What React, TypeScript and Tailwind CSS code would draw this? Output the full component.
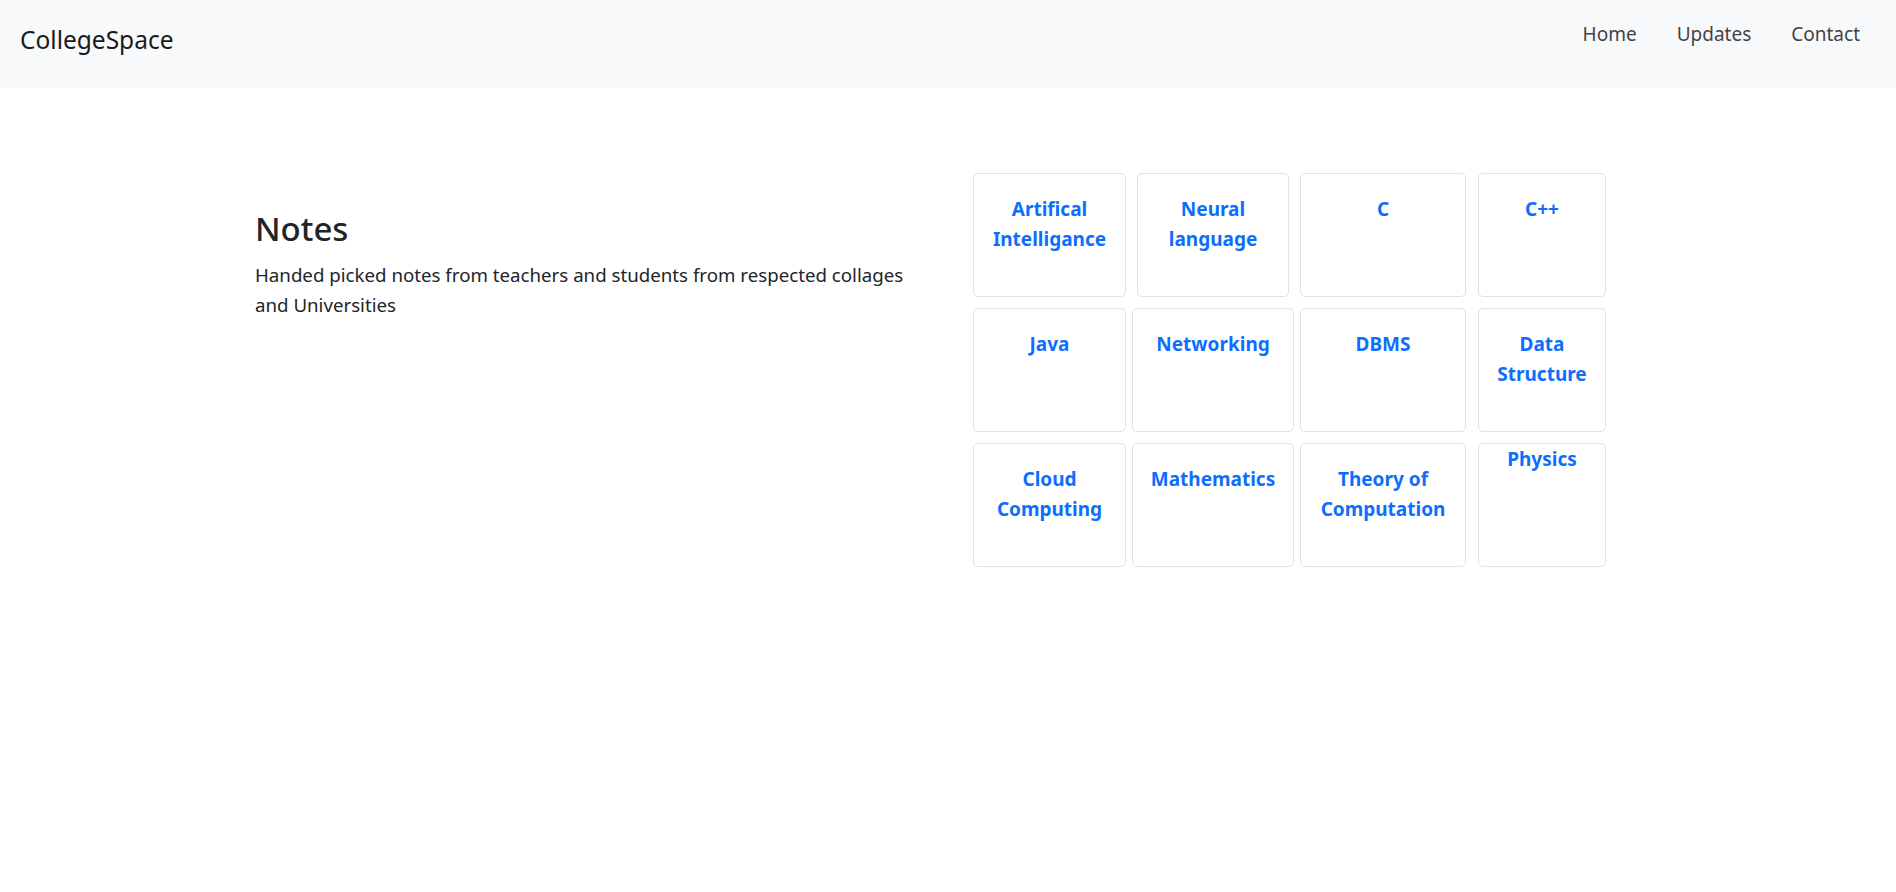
import React from 'react';

const font = { fontFamily: '"Noto Sans", "Open Sans", Arial, sans-serif' };

type Subject = { label: string; w: string; ml: string; top?: boolean };

const rows: Subject[][] = [
  [
    { label: 'Artifical Intelligance', w: 'w-[153px]', ml: 'ml-0' },
    { label: 'Neural language', w: 'w-[152px]', ml: 'ml-[11px]' },
    { label: 'C', w: 'w-[166px]', ml: 'ml-[11px]' },
    { label: 'C++', w: 'w-[128px]', ml: 'ml-[12px]' },
  ],
  [
    { label: 'Java', w: 'w-[153px]', ml: 'ml-0' },
    { label: 'Networking', w: 'w-[162px]', ml: 'ml-[6px]' },
    { label: 'DBMS', w: 'w-[166px]', ml: 'ml-[6px]' },
    { label: 'Data Structure', w: 'w-[128px]', ml: 'ml-[12px]' },
  ],
  [
    { label: 'Cloud Computing', w: 'w-[153px]', ml: 'ml-0' },
    { label: 'Mathematics', w: 'w-[162px]', ml: 'ml-[6px]' },
    { label: 'Theory of Computation', w: 'w-[166px]', ml: 'ml-[6px]' },
    { label: 'Physics', w: 'w-[128px]', ml: 'ml-[12px]', top: true },
  ],
];

function SubjectCard({ label, w, ml, top }: Subject) {
  return (
    <a
      href="#"
      className={`${w} ${ml} h-[124px] shrink-0 rounded-[5px] border border-[#dee2e6] bg-white px-[12px] text-center text-[19px] font-bold leading-[30px] text-[#0d6efd] ${top ? 'pt-0' : 'pt-[20px]'}`}
    >
      {label}
    </a>
  );
}

export default function App() {
  return (
    <div className="min-h-screen bg-white text-[#212529]" style={font}>
      <nav className="flex h-[88px] items-start justify-between bg-[#f8f9fa] pl-[20px]">
        <span className="mt-[22px] text-[24.5px] leading-[36px] text-[#1a1b1c]">CollegeSpace</span>
        <ul className="mt-[20px] flex gap-[40px] pr-[36px] text-[19px] leading-[28px] text-[#434445]">
          <li><a href="#">Home</a></li>
          <li><a href="#">Updates</a></li>
          <li><a href="#">Contact</a></li>
        </ul>
      </nav>

      <main className="flex pl-[255px] pt-[85px]">
        <section className="w-[718px] shrink-0 pt-[36px]">
          <h2 className="text-[33px] font-medium leading-[39px] text-[#212529]">Notes</h2>
          <p className="mt-[12px] w-[670px] text-[18.7px] leading-[30px] text-[#212529]">
            Handed picked notes from teachers and students from respected collages and Universities
          </p>
        </section>

        <div className="flex flex-col gap-[11px]">
          {rows.map((row, i) => (
            <div key={i} className="flex">
              {row.map((c) => (
                <SubjectCard key={c.label} {...c} />
              ))}
            </div>
          ))}
        </div>
      </main>
    </div>
  );
}
